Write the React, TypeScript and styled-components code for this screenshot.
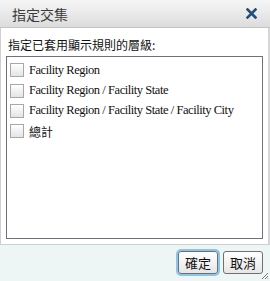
import React from "react";
import styled, { createGlobalStyle } from "styled-components";

const Global = createGlobalStyle`
  html, body { margin: 0; padding: 0; background: #ffffff; }
  * { box-sizing: border-box; }
`;

const Window = styled.div`
  width: 270px;
  height: 281px;
  display: flex;
  flex-direction: column;
  font-family: "Noto Sans CJK TC", "Liberation Sans", sans-serif;
  color: #222;
  position: relative;
  overflow: hidden;
`;

const TitleBar = styled.div`
  height: 28px;
  flex: none;
  display: flex;
  align-items: center;
  justify-content: space-between;
  padding: 0 13px 0 12px;
  background: linear-gradient(#f6f6f6, #dcdcdc);
  border-bottom: 1px solid #c4c4c4;
`;

const Title = styled.span`
  font-size: 14px;
  color: #3a3a3a;
  line-height: 1;
`;

const Close = styled.svg`
  width: 11px;
  height: 11px;
`;

const Body = styled.div`
  flex: 1;
  background: #fff;
  border-left: 1px solid #cfcfcf;
  border-right: 2px solid #d6d6d6;
  padding: 9px 5px 5px 5px;
  display: flex;
  flex-direction: column;
`;

const Label = styled.div`
  font-size: 12px;
  line-height: 16px;
  padding-left: 2px;
  margin-bottom: 3px;
  color: #111;
`;

const ListBox = styled.div`
  height: 183px;
  border: 1px solid #707080;
  padding: 3px 3px;
  display: flex;
  flex-direction: column;
`;

const Row = styled.label<{ cjk?: boolean }>`
  height: 20.4px;
  flex: none;
  display: flex;
  align-items: center;
  gap: 5px;
  white-space: nowrap;
  font-family: ${(p) =>
    p.cjk ? `"Noto Sans CJK TC", sans-serif` : `"Liberation Serif", "Noto Sans CJK TC", serif`};
  font-size: ${(p) => (p.cjk ? "12px" : "12.5px")};
  letter-spacing: ${(p) => (p.cjk ? "0" : "-0.45px")};
  color: #111;
`;

const Box = styled.span`
  width: 14px;
  height: 14px;
  flex: none;
  border: 1px solid #a8a8a8;
  background: linear-gradient(#ffffff, #e4e4e4);
`;

const Footer = styled.div`
  height: 37px;
  flex: none;
  background: #eef6f5;
  border-top: 1px solid #c9d2d2;
  display: flex;
  justify-content: flex-end;
  align-items: center;
  gap: 5px;
  padding: 0 7px 1px 0;
`;

const Button = styled.button<{ focused?: boolean }>`
  height: 23px;
  width: 40px;
  padding: 0;
  font-family: "Noto Sans CJK TC", sans-serif;
  font-size: 13px;
  color: #111;
  border: 1px solid #707070;
  border-radius: 3px;
  background: linear-gradient(#ffffff, #e6e6e6);
  box-shadow: ${(p) => (p.focused ? "0 0 0 2px #8cc4ea" : "none")};
  line-height: 1;
`;

const Grip = styled.svg`
  position: absolute;
  right: 1px;
  bottom: 1px;
  width: 8px;
  height: 8px;
`;

const items = [
  { text: "Facility Region" },
  { text: "Facility Region / Facility State" },
  { text: "Facility Region / Facility State / Facility City" },
  { text: "總計", cjk: true },
];

export default function App() {
  return (
    <>
      <Global />
      <Window>
        <TitleBar>
          <Title>指定交集</Title>
          <Close viewBox="0 0 11 11">
            <path d="M1.5 1.5 L9.5 9.5 M9.5 1.5 L1.5 9.5" stroke="#1f4f7a" strokeWidth="2.6" strokeLinecap="square" />
          </Close>
        </TitleBar>
        <Body>
          <Label>指定已套用顯示規則的層級:</Label>
          <ListBox>
            {items.map((it) => (
              <Row key={it.text} cjk={it.cjk}>
                <Box />
                {it.text}
              </Row>
            ))}
          </ListBox>
        </Body>
        <Footer>
          <Button focused>確定</Button>
          <Button>取消</Button>
        </Footer>
        <Grip viewBox="0 0 8 8">
          <path d="M7 1 L1 7 M7 4 L4 7 M7 6.5 L6.5 7" stroke="#777" strokeWidth="1" />
        </Grip>
      </Window>
    </>
  );
}
